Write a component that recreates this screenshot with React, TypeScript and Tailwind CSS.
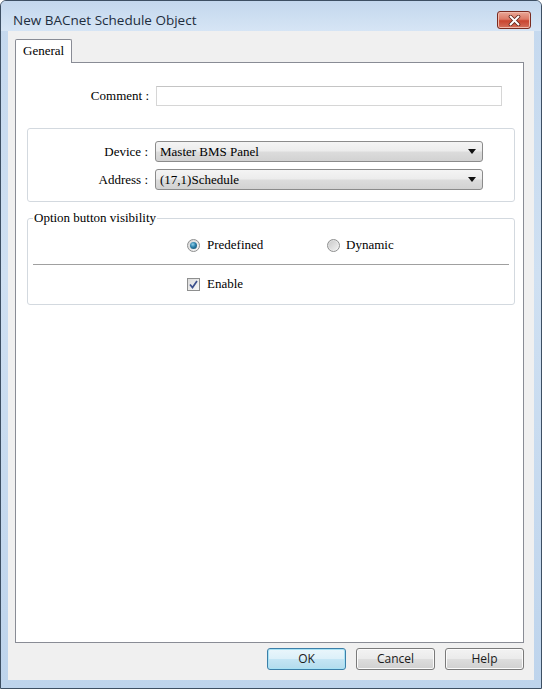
import React from "react";

const SERIF = "font-['Liberation_Serif','Times_New_Roman',serif]";
const SANS = "font-['Open_Sans','Noto_Sans',Arial,sans-serif]";

function Combo({ value }: { value: string }) {
  return (
    <div className="w-[328px] h-[21px] flex items-center rounded-[3px] border border-[#8b8b8b] bg-[linear-gradient(180deg,#f4f4f4_0%,#ececec_48%,#dcdcdc_52%,#d2d2d2_100%)] pl-[4px] pr-[6px]">
      <span className={"flex-1 text-[13px] leading-none text-black " + SERIF}>{value}</span>
      <svg width="8" height="5" viewBox="0 0 8 5">
        <path d="M0 0 H8 L4 5 Z" fill="#111" />
      </svg>
    </div>
  );
}

function Radio({ checked }: { checked: boolean }) {
  return (
    <div className="w-[13px] h-[13px] rounded-full border border-[#8e8f8f] bg-[linear-gradient(135deg,#d8d8d8,#f6f6f6)] flex items-center justify-center">
      {checked ? (
        <div className="w-[7px] h-[7px] rounded-full bg-[radial-gradient(circle_at_40%_35%,#8fd0ea_0%,#2a7ea8_45%,#174a66_100%)]" />
      ) : (
        <div className="w-[9px] h-[9px] rounded-full bg-[linear-gradient(135deg,#cbcbcb,#efefef)]" />
      )}
    </div>
  );
}

function Btn({ label, primary }: { label: string; primary?: boolean }) {
  return (
    <div
      className={
        "w-[79px] h-[22px] flex items-center justify-center rounded-[3px] border text-[12px] text-[#1a1a1a] " +
        SANS +
        " " +
        (primary
          ? "border-[#3c7fa8] bg-[linear-gradient(180deg,#eaf6fb_0%,#dcf0f9_48%,#c4e5f4_52%,#b3dced_100%)] shadow-[inset_0_0_0_1px_#a8e2f5]"
          : "border-[#7a7a7a] bg-[linear-gradient(180deg,#f3f3f3_0%,#ebebeb_48%,#dddddd_52%,#d0d0d0_100%)] shadow-[inset_0_0_0_1px_#fbfbfb]")
      }
    >
      {label}
    </div>
  );
}

export default function App() {
  return (
    <div className="w-[542px] h-[689px] bg-white">
      <div className="w-full h-full flex flex-col border border-[#3d4f63] rounded-t-[6px] overflow-hidden bg-[linear-gradient(180deg,#c4d8ee_0%,#cfe0f2_40%,#bed4ec_100%)]">
        {/* Title bar */}
        <div className="h-[30px] flex items-start pt-[10px] pl-[12px] pr-[10px] bg-[linear-gradient(180deg,#c3d7ed_0%,#d6e5f5_100%)]">
          <span className={"flex-1 text-[13.5px] leading-[18px] text-[#1e2d3d] " + SANS}>
            New BACnet Schedule Object
          </span>
          <div className="w-[34px] h-[18px] rounded-[3px] border border-[#7a2b20] bg-[linear-gradient(180deg,#e9a796_0%,#dc7a66_45%,#c9442f_55%,#d4705c_100%)] flex items-center justify-center shadow-[inset_0_0_0_1px_#f0b9ab]">
            <svg width="13" height="11" viewBox="0 0 13 11">
              <path d="M2.5 1.5 L10.5 9.5 M10.5 1.5 L2.5 9.5" stroke="#5b2219" strokeWidth="3.6" strokeLinecap="round" />
              <path d="M2.5 1.5 L10.5 9.5 M10.5 1.5 L2.5 9.5" stroke="#ffffff" strokeWidth="2" strokeLinecap="round" />
            </svg>
          </div>
        </div>

        {/* Client area */}
        <div className="flex-1 flex flex-col mx-[7px] mb-[8px] bg-[#f0f0f0] pt-[8px] pl-[7px] pr-[10px] pb-[10px]">
          {/* Tabs */}
          <div className="flex">
            <div
              className={
                "relative z-10 w-[57px] h-[24px] -mb-[1px] border border-b-0 border-[#898c95] bg-white rounded-t-[2px] pl-[7px] pt-[3px] text-[13px] leading-[16px] text-black " +
                SERIF
              }
            >
              General
            </div>
          </div>
          {/* Panel */}
          <div className="flex-1 border border-[#898c95] bg-white flex flex-col">
            {/* Comment */}
            <div className="flex items-center mt-[23px] gap-[7px]">
              <span className={"w-[133px] text-right text-[13px] text-black " + SERIF}>Comment :</span>
              <div className="w-[346px] h-[20px] border border-[#d6d6d6] border-t-[#c4c4c4] bg-white" />
            </div>

            {/* Group 1 */}
            <div className="ml-[11px] w-[488px] mt-[22px] border border-[#d3d9df] rounded-[3px] pt-[12px] pb-[11px] flex flex-col gap-[7px]">
              <div className="flex items-center gap-[7px]">
                <span className={"w-[120px] text-right text-[13px] text-black " + SERIF}>Device :</span>
                <Combo value="Master BMS Panel" />
              </div>
              <div className="flex items-center gap-[7px]">
                <span className={"w-[120px] text-right text-[13px] text-black " + SERIF}>Address :</span>
                <Combo value="(17,1)Schedule" />
              </div>
            </div>

            {/* Group 2 */}
            <div className="relative ml-[11px] w-[488px] mt-[16px] border border-[#d3d9df] rounded-[3px] pt-[16px] pb-[10px] flex flex-col">
              <span
                className={
                  "absolute -top-[9px] left-[5px] bg-white px-[1px] text-[13px] leading-[16px] text-black " + SERIF
                }
              >
                Option button visibility
              </span>
              <div className="flex items-center h-[20px] pl-[159px]">
                <div className="w-[140px] flex items-center gap-[7px]">
                  <Radio checked />
                  <span className={"text-[13px] text-black " + SERIF}>Predefined</span>
                </div>
                <div className="flex items-center gap-[6px]">
                  <Radio checked={false} />
                  <span className={"text-[13px] text-black " + SERIF}>Dynamic</span>
                </div>
              </div>
              <div className="mx-[5px] mt-[9px] h-[2px] border-t border-[#a0a0a0] border-b border-b-white" />
              <div className="flex items-center h-[20px] pl-[159px] mt-[8px]">
                <div className="flex items-center gap-[7px]">
                  <div className="w-[13px] h-[13px] border border-[#8e8f8f] bg-[linear-gradient(135deg,#dcdcdc,#f7f7f7)] flex items-center justify-center">
                    <svg width="9" height="9" viewBox="0 0 9 9">
                      <path d="M1 4.5 L3.5 7.5 L8 1" stroke="#3b4f8c" strokeWidth="1.7" fill="none" />
                    </svg>
                  </div>
                  <span className={"text-[13px] text-black " + SERIF}>Enable</span>
                </div>
              </div>
            </div>
          </div>

          {/* Buttons */}
          <div className="flex justify-end gap-[10px] mt-[5px]">
            <Btn label="OK" primary />
            <Btn label="Cancel" />
            <Btn label="Help" />
          </div>
        </div>
      </div>
    </div>
  );
}
